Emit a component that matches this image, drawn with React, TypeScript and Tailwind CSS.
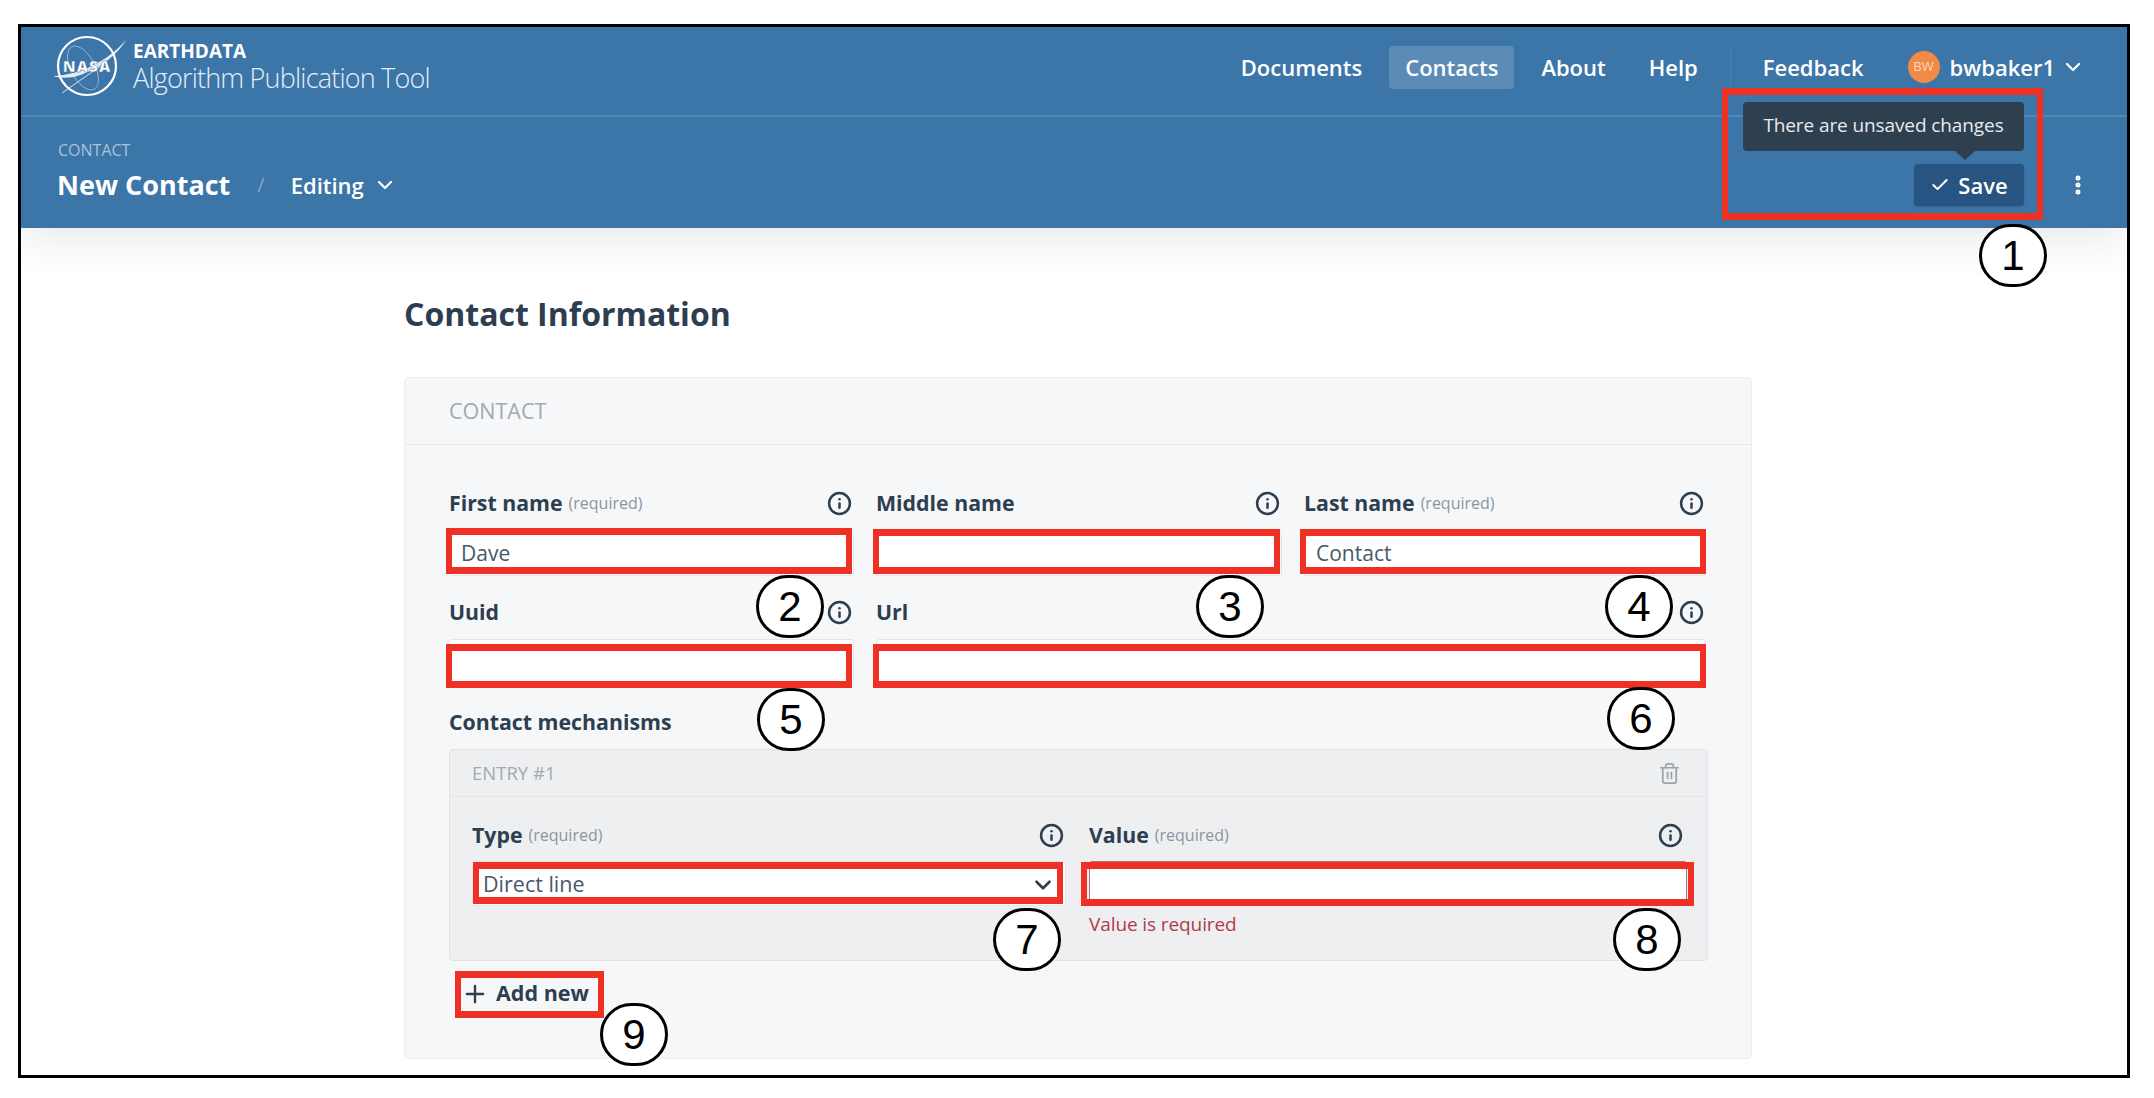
import { Check, ChevronDown, EllipsisVertical, Info, Plus, Trash2 } from "lucide-react";

const NasaLogo = () => (
  <svg width="80" height="64" viewBox="0 0 80 64" fill="none" className="shrink-0">
    <circle cx="37" cy="31" r="29" stroke="#fff" strokeWidth="2.2" />
    <ellipse cx="33" cy="33" rx="12" ry="24" transform="rotate(-28 33 33)" stroke="#ffffff" strokeOpacity="0.5" strokeWidth="0.8" />
    <path d="M3 41 C 30 40 58 26 76 5 C 66 22 46 36 24 42 C 16 43 8 43 3 41 Z" fill="#fff" fillOpacity="0.85" />
    <path d="M12 58 L52 30" stroke="#fff" strokeOpacity="0.8" strokeWidth="1" />
    <text x="37" y="37" textAnchor="middle" fontSize="15.500" fontWeight="800" letterSpacing="1" fill="#fff" stroke="#3c75a7" strokeWidth="0.4" fontFamily="Open Sans, sans-serif">
      NASA
    </text>
  </svg>
);

const FieldLabel = ({ name, required }: { name: string; required?: boolean }) => (
  <div className="flex h-[24px] items-center pr-[2px] text-[#2d3e50]">
    <span className="text-[21.3px] leading-[24px] font-bold">{name}</span>
    {required && <span className="ml-[6px] text-[16px] text-[#8b95a0]">(required)</span>}
    <Info className="ml-auto" size={25} strokeWidth={2.4} />
  </div>
);

const TextField = ({ name, required, value, className = "" }: { name: string; required?: boolean; value?: string; className?: string }) => (
  <div className={className}>
    <FieldLabel name={name} required={required} />
    <input
      readOnly
      value={value ?? ""}
      className="mt-[15px] h-[46px] w-full rounded-[3px] border border-[#e3e5e8] bg-white px-[11px] text-[21px] text-[#47586a]"
    />
  </div>
);

const RedBox = ({ className }: { className: string }) => (
  <div className={"absolute border-x-[6px] border-y-[7px] border-[#ee3124] " + className} />
);

const Marker = ({ n, className }: { n: number; className: string }) => (
  <div
    className={
      "absolute flex h-[63px] w-[68px] items-center justify-center rounded-full border-[3px] border-black bg-white font-['Liberation_Sans',sans-serif] text-[42px] text-black " +
      className
    }
  >
    {n}
  </div>
);

export default function App() {
  return (
    <div className="relative h-[1098px] w-[2154px] overflow-hidden bg-white pt-[24px] pl-[18px] font-['Open_Sans','Noto_Sans',sans-serif]">
      <div className="flex h-[1054px] w-[2112px] flex-col overflow-hidden border-[3px] border-black">
        <header className="relative z-10 shrink-0 bg-[#3c75a7] shadow-[0_12px_40px_rgba(0,0,0,0.09)]">
          <div className="flex h-[90px] items-center border-b-2 border-[#5186b4] pr-[42px] pb-[8px] pl-[29px]">
            <NasaLogo />
            <div className="ml-[3px] flex flex-col text-white">
              <span className="text-[19px] leading-[22px] font-bold">EARTHDATA</span>
              <span className="text-[27px] leading-[32px] font-light tracking-[-0.8px] text-[#e4edf5]">
                Algorithm Publication Tool
              </span>
            </div>
            <nav className="ml-auto flex items-center gap-[11px] text-[22px] font-semibold text-white">
              <a className="flex h-[43px] items-center rounded-[4px] px-[16px]">Documents</a>
              <a className="flex h-[43px] items-center rounded-[4px] bg-[#5a8cb7] px-[16px]">Contacts</a>
              <a className="flex h-[43px] items-center rounded-[4px] px-[16px]">About</a>
              <a className="flex h-[43px] items-center rounded-[4px] px-[16px]">Help</a>
              <div className="ml-[5px] h-[40px] w-px bg-[#4a80af]" />
              <a className="ml-[5px] flex h-[43px] items-center rounded-[4px] px-[16px]">Feedback</a>
              <div className="ml-[17px] flex items-center">
                <span className="flex h-[32px] w-[32px] items-center justify-center rounded-full bg-[#f08a45] text-[13px] font-normal text-[#fbd9c0]">
                  BW
                </span>
                <span className="ml-[10px]">bwbaker1</span>
                <ChevronDown className="ml-[6px]" size={24} strokeWidth={2.2} />
              </div>
            </nav>
          </div>
          <div className="flex h-[111px] items-end justify-between pr-[37px] pb-[22px] pl-[37px]">
            <div className="mb-[3px] text-white">
              <div className="text-[16px] leading-[22px] text-[#a9c3da]">CONTACT</div>
              <div className="mt-[6px] -ml-[1px] flex items-center">
                <span className="text-[27px] leading-[36px] font-bold">New Contact</span>
                <span className="ml-[27px] text-[20px] text-[#86a9c9]">/</span>
                <span className="ml-[26px] text-[22px] font-semibold">Editing</span>
                <ChevronDown className="ml-[9px]" size={24} strokeWidth={2.2} />
              </div>
            </div>
            <div className="flex items-center gap-[42px] text-white">
              <div className="relative">
                <div className="absolute right-0 bottom-[55px] flex h-[49px] w-[281px] items-center justify-center rounded-[4px] bg-[#2e3f50] pb-[2px] text-[19px] tracking-[-0.1px] text-[#e6eaee]">
                  There are unsaved changes
                  <div className="absolute top-full left-[212px] h-0 w-0 border-x-[10px] border-t-[9px] border-x-transparent border-t-[#2e3f50]" />
                </div>
                <button className="flex h-[42px] w-[110px] items-center justify-center gap-[8px] rounded-[4px] bg-[#275480] text-[22px] font-semibold shadow-sm">
                  <Check size={20} strokeWidth={2.4} />
                  Save
                </button>
              </div>
              <EllipsisVertical size={24} strokeWidth={3} />
            </div>
          </div>
        </header>

        <main className="flex-1 bg-white pl-[383px]">
          <h1 className="pt-[66px] text-[32px] leading-[40px] font-bold text-[#2d3e50]">Contact Information</h1>
          <section className="mt-[43px] h-[682px] w-[1348px] rounded-[5px] border border-[#ebecee] bg-[#f6f7f8]">
            <div className="flex h-[67px] items-center border-b border-[#e6e8ea] pl-[44px] text-[21.5px] text-[#a2a9b1]">
              CONTACT
            </div>
            <div className="pt-[46px] pr-[45px] pl-[44px]">
              <div className="grid grid-cols-[405px_406px_402px] gap-x-[22px] gap-y-[24px]">
                <TextField name="First name" required value="Dave" />
                <TextField name="Middle name" />
                <TextField name="Last name" required value="Contact" />
                <TextField name="Uuid" />
                <TextField name="Url" className="col-span-2" />
              </div>
              <div className="mt-[25px] text-[21.3px] leading-[24px] font-bold text-[#2d3e50]">Contact mechanisms</div>
              <div className="mt-[15px] h-[212px] w-[1259px] rounded-[4px] border border-[#e1e3e6] bg-[#eeeff1]">
                <div className="flex h-[47px] items-center justify-between border-b border-[#e2e4e7] pr-[26px] pl-[22px] text-[18.5px] text-[#a2a9b1]">
                  ENTRY #1
                  <Trash2 className="text-[#9aa3ad]" size={23} strokeWidth={1.8} />
                </div>
                <div className="grid grid-cols-[594px_598px] gap-x-[23px] pt-[26px] pl-[22px]">
                  <div>
                    <FieldLabel name="Type" required />
                    <div className="mt-[14px] flex h-[45px] items-center rounded-[3px] border border-[#e3e5e8] bg-white pt-[2px] pr-[9px] pl-[10px] text-[21.500px] text-[#47586a]">
                      Direct line
                      <ChevronDown className="ml-auto text-[#2d3e50]" size={26} strokeWidth={2.4} />
                    </div>
                  </div>
                  <div>
                    <div className="pr-[2px]">
                      <FieldLabel name="Value" required />
                    </div>
                    <input readOnly value="" className="mt-[14px] h-[45px] w-full rounded-[3px] border border-[#b7707c] bg-white" />
                    <div className="mt-[5px] text-[19px] leading-[26px] tracking-[-0.1px] text-[#b23a4c]">Value is required</div>
                  </div>
                </div>
              </div>
              <button className="mt-[16px] ml-[12px] flex h-[33px] items-center gap-[7px] text-[21.500px] font-bold text-[#2d3e50]">
                <Plus size={28} strokeWidth={2} />
                Add new
              </button>
            </div>
          </section>
        </main>
      </div>

      <RedBox className="top-[88px] left-[1722px] z-20 h-[132px] w-[321px]" />
      <RedBox className="top-[528px] left-[446px] h-[46px] w-[406px]" />
      <RedBox className="top-[529px] left-[873px] h-[45px] w-[407px]" />
      <RedBox className="top-[529px] left-[1300px] h-[45px] w-[406px]" />
      <RedBox className="top-[644px] left-[446px] h-[44px] w-[406px]" />
      <RedBox className="top-[644px] left-[873px] h-[44px] w-[833px]" />
      <RedBox className="top-[862px] left-[473px] h-[42px] w-[590px]" />
      <RedBox className="top-[862px] left-[1081px] h-[44px] w-[613px]" />
      <RedBox className="top-[971px] left-[455px] h-[47px] w-[149px]" />

      <Marker n={1} className="top-[224px] left-[1979px] z-20" />
      <Marker n={2} className="top-[575px] left-[756px]" />
      <Marker n={3} className="top-[575px] left-[1196px]" />
      <Marker n={4} className="top-[575px] left-[1605px]" />
      <Marker n={5} className="top-[688px] left-[757px]" />
      <Marker n={6} className="top-[687px] left-[1607px]" />
      <Marker n={7} className="top-[908px] left-[993px]" />
      <Marker n={8} className="top-[908px] left-[1613px]" />
      <Marker n={9} className="top-[1003px] left-[600px]" />
    </div>
  );
}
